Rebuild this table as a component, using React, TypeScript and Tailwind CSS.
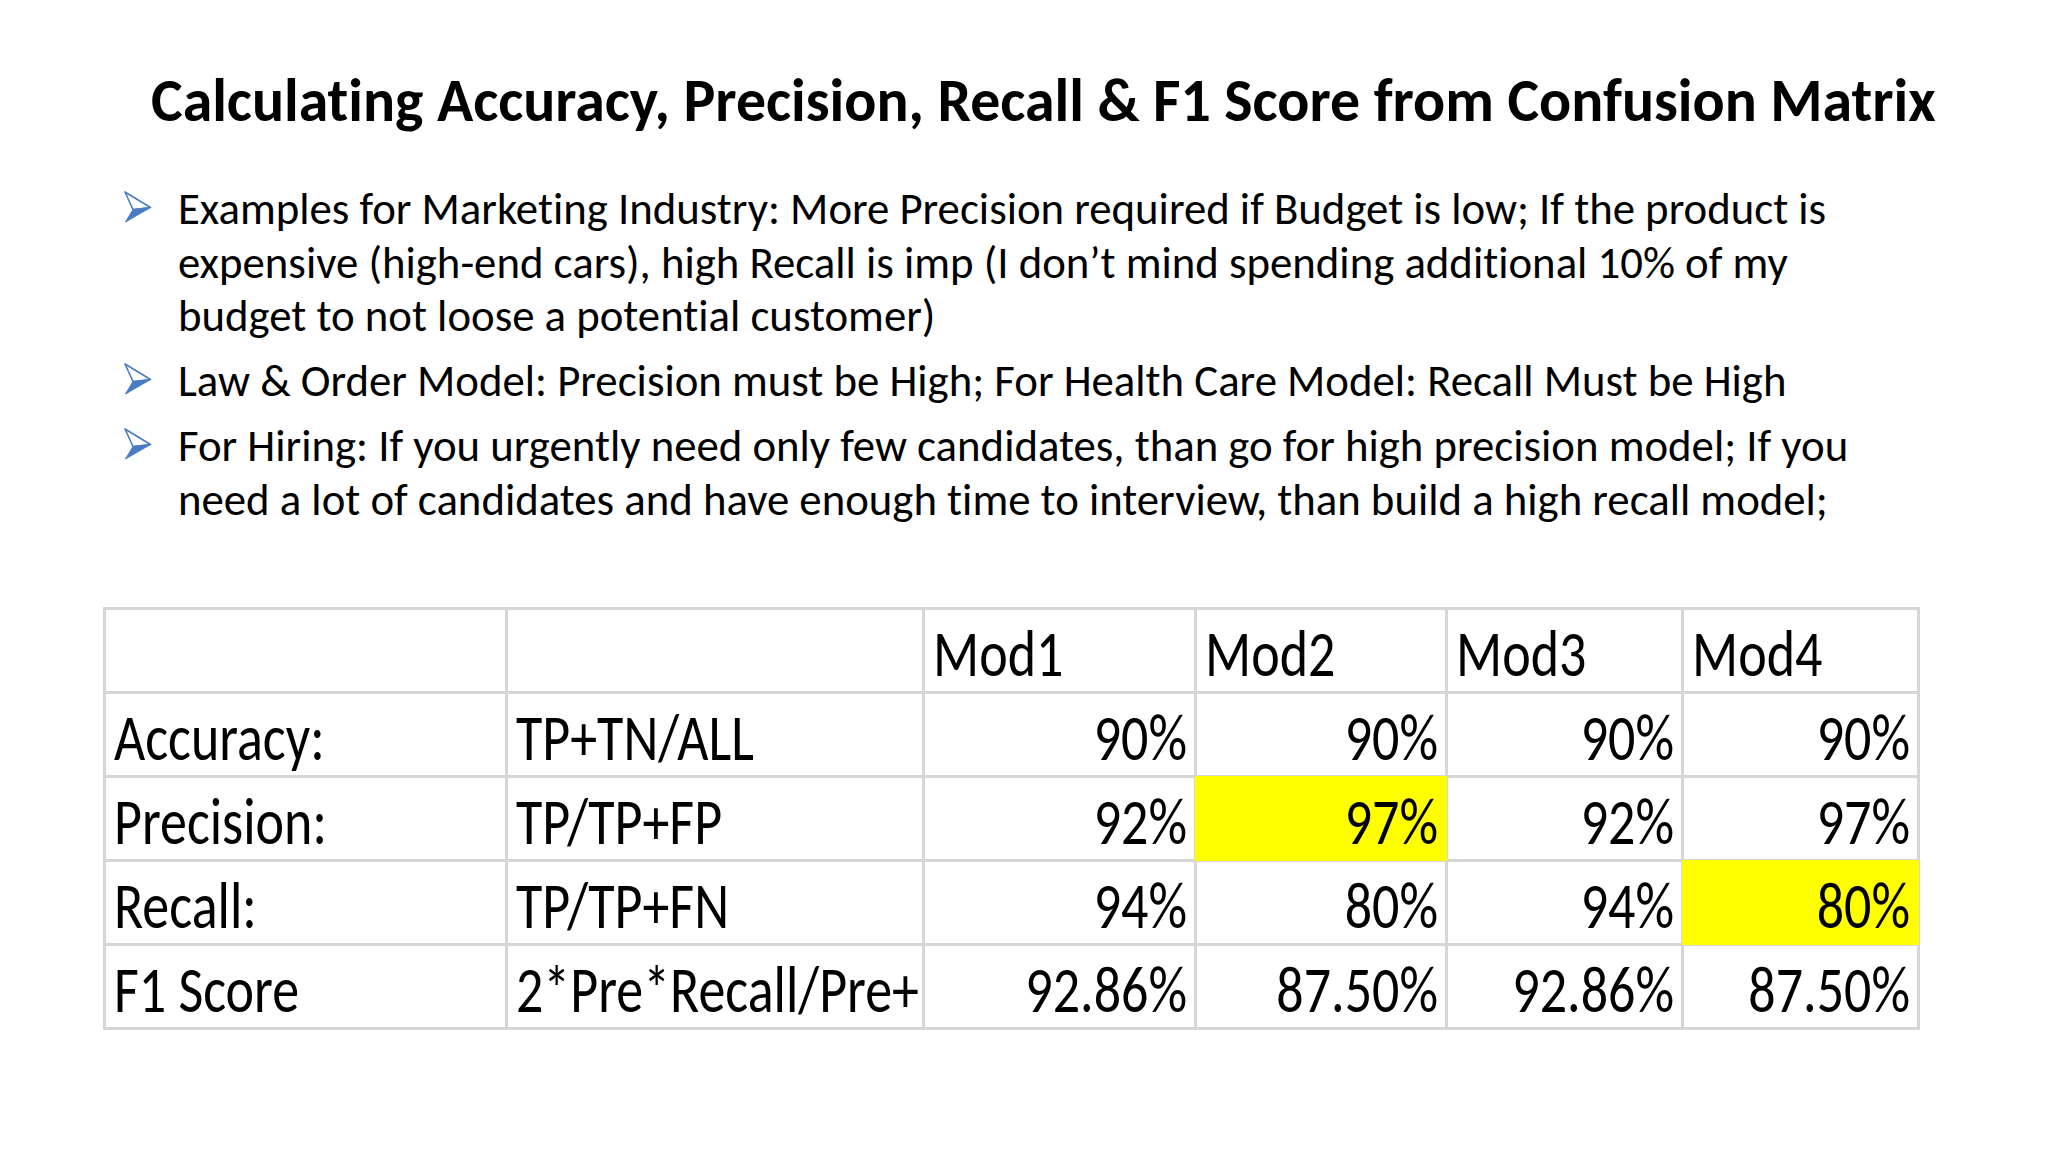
const Arrow = () => (
  <svg width="28" height="32" viewBox="0 0 28 32" className="shrink-0 mt-[9px]">
    <path d="M1 1 L26.5 16.5 L9 18.5 Z" fill="#ffffff" stroke="#4a7cc4" strokeWidth="1.6" strokeLinejoin="round" />
    <path d="M9 18.5 L26.5 16.5 L1.5 31 Z" fill="#4a7cc4" stroke="#4a7cc4" strokeWidth="1" strokeLinejoin="round" />
  </svg>
);

type Cell = { t: string; right?: boolean; hi?: boolean };

const rows: Cell[][] = [
  [{ t: "" }, { t: "" }, { t: "Mod1" }, { t: "Mod2" }, { t: "Mod3" }, { t: "Mod4" }],
  [
    { t: "Accuracy:" },
    { t: "TP+TN/ALL" },
    { t: "90%", right: true },
    { t: "90%", right: true },
    { t: "90%", right: true },
    { t: "90%", right: true },
  ],
  [
    { t: "Precision:" },
    { t: "TP/TP+FP" },
    { t: "92%", right: true },
    { t: "97%", right: true, hi: true },
    { t: "92%", right: true },
    { t: "97%", right: true },
  ],
  [
    { t: "Recall:" },
    { t: "TP/TP+FN" },
    { t: "94%", right: true },
    { t: "80%", right: true },
    { t: "94%", right: true },
    { t: "80%", right: true, hi: true },
  ],
  [
    { t: "F1 Score" },
    { t: "2*Pre*Recall/Pre+" },
    { t: "92.86%", right: true },
    { t: "87.50%", right: true },
    { t: "92.86%", right: true },
    { t: "87.50%", right: true },
  ],
];

export default function App() {
  return (
    <div className="w-[2048px] h-[1152px] bg-white text-black flex flex-col [font-family:Carlito,'Liberation_Sans',sans-serif] [font-variant-ligatures:none] overflow-hidden">
      <h1 className="mt-[65px] pl-[151px] text-[59.8px] leading-[72px] font-bold whitespace-nowrap">
        Calculating Accuracy, Precision, Recall &amp; F1 Score from Confusion Matrix
      </h1>

      <div className="mt-[45px] pl-[124px] flex flex-col gap-[11.5px] text-[44.8px] leading-[53.5px]">
        <div className="flex gap-[26px]">
          <Arrow />
          <p>
            Examples for Marketing Industry: More Precision required if Budget is low; If the product is
            <br />
            expensive (high-end cars), high Recall is imp (I don’t mind spending additional 10% of my
            <br />
            budget to not loose a potential customer)
          </p>
        </div>
        <div className="flex gap-[26px]">
          <Arrow />
          <p>Law &amp; Order Model: Precision must be High; For Health Care Model: Recall Must be High</p>
        </div>
        <div className="flex gap-[26px]">
          <Arrow />
          <p>
            For Hiring: If you urgently need only few candidates, than go for high precision model; If you
            <br />
            need a lot of candidates and have enough time to interview, than build a high recall model;
          </p>
        </div>
      </div>

      <div className="mt-[81px] ml-[103px] w-fit grid grid-cols-[399px_414px_269px_248px_233px_233px] auto-rows-[81px] gap-[3px] p-[3px] bg-[#d6d6d6]">
        {rows.flatMap((r, ri) =>
          r.map((c, ci) => (
            <div
              key={`${ri}-${ci}`}
              className={
                c.hi
                  ? "relative z-10 flex items-center justify-end pl-[8px] pr-[7px] pt-[6px] bg-[#ffff00] shadow-[0_0_0_2px_#ffff00] whitespace-nowrap text-[54px] leading-none"
                  : c.right
                  ? "flex items-center justify-end pl-[8px] pr-[7px] pt-[6px] bg-white whitespace-nowrap text-[54px] leading-none"
                  : "flex items-center justify-start pl-[8px] pr-[7px] pt-[6px] bg-white whitespace-nowrap text-[54px] leading-none"
              }
            >
              <span className="inline-block scale-y-121 origin-center">{c.t}</span>
            </div>
          ))
        )}
      </div>
    </div>
  );
}
